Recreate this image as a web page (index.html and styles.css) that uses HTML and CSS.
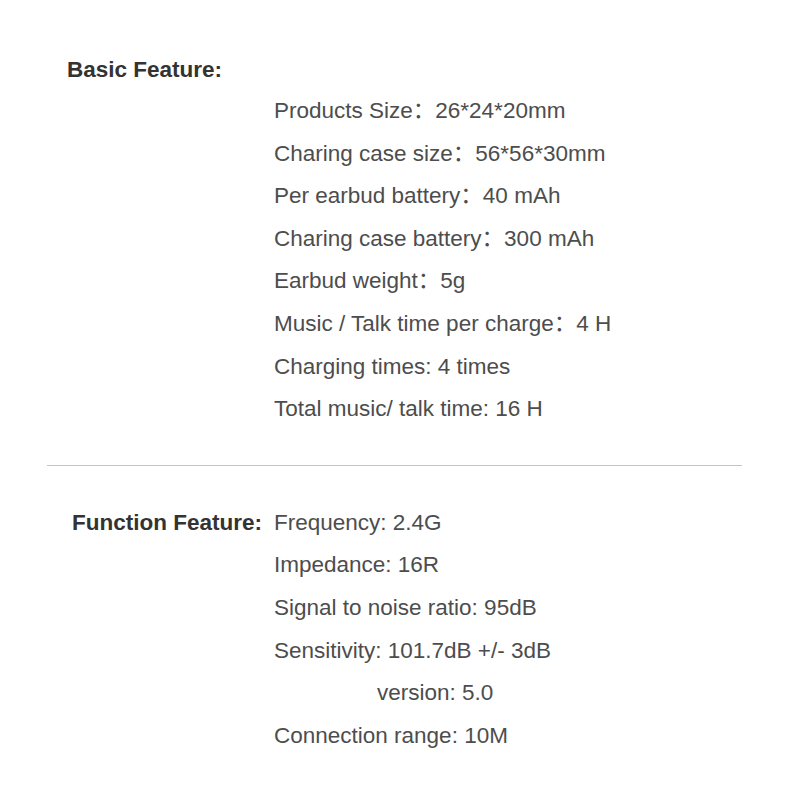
FILE: index.html
```html
<!DOCTYPE html>
<html>
<head>
<meta charset="utf-8">
<link rel="stylesheet" href="styles.css">
</head>
<body>
<div class="page">
  <section class="basic">
    <h2 class="heading">Basic Feature:</h2>
    <ul class="specs">
      <li>Products Size：26*24*20mm</li>
      <li>Charing case size：56*56*30mm</li>
      <li>Per earbud battery：40 mAh</li>
      <li>Charing case battery：300 mAh</li>
      <li>Earbud weight：5g</li>
      <li>Music / Talk time per charge：4 H</li>
      <li>Charging times: 4 times</li>
      <li>Total music/ talk time: 16 H</li>
    </ul>
  </section>
  <hr class="divider">
  <section class="function">
    <h2 class="fn-label">Function Feature:</h2>
    <ul class="fn-specs">
      <li>Frequency: 2.4G</li>
      <li>Impedance: 16R</li>
      <li>Signal to noise ratio: 95dB</li>
      <li>Sensitivity: 101.7dB +/- 3dB</li>
      <li class="indent">version: 5.0</li>
      <li>Connection range: 10M</li>
    </ul>
  </section>
</div>
</body>
</html>
```
FILE: styles.css
```css
html, body {
  margin: 0;
  padding: 0;
  background: #ffffff;
}
body {
  font-family: "Liberation Sans", Arial, "Noto Sans CJK SC", sans-serif;
  color: #4d4d4d;
  font-size: 22.5px;
}
.page {
  width: 800px;
  padding-top: 52px;
}
.heading {
  margin: 0 0 0 67px;
  font-size: 22.5px;
  font-weight: bold;
  line-height: 36px;
  color: #333333;
}
.specs, .fn-specs {
  list-style: none;
  margin: 0;
  padding: 0;
}
.specs {
  padding-left: 274px;
  padding-top: 2px;
}
.specs li, .fn-specs li {
  line-height: 42.6px;
  white-space: nowrap;
}
.divider {
  border: 0;
  border-top: 1px solid #c4c4c4;
  margin: 34px 0 0 47px;
  width: 695px;
  height: 0;
}
.function {
  display: grid;
  grid-template-columns: 274px 1fr;
  margin-top: 36px;
}
.fn-label {
  margin: 0;
  font-size: 22.5px;
  font-weight: bold;
  line-height: 42.6px;
  color: #333333;
  text-align: right;
  padding-right: 12px;
  white-space: nowrap;
}
.fn-specs .indent {
  padding-left: 103px;
}
```
